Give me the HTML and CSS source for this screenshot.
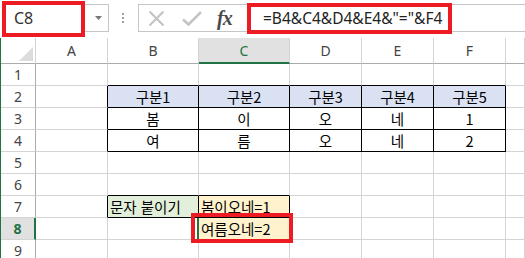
FILE: index.html
```html
<!DOCTYPE html>
<html lang="ko">
<head>
    <meta charset="UTF-8">
    <meta name="viewport" content="width=device-width, initial-scale=1.0">
    <title>문자 붙이기</title>
    <link rel="stylesheet" href="styles.css">
</head>
<body>

<!-- Formula bar -->
<div class="toolbar">
    <div class="name-box">C8</div>
    <div class="name-drop">
        <svg width="7" height="4" viewBox="0 0 7 4"><path d="M0 0h7L3.5 4z" fill="#777"/></svg>
    </div>
    <div class="grip"><i></i><i></i><i></i></div>
    <div class="fx-box">
        <svg class="fx-cancel" width="17" height="17" viewBox="0 0 17 17">
            <path d="M1.5 1.5l14 14M15.5 1.5l-14 14" stroke="#c4c4c4" stroke-width="2.2" fill="none"/>
        </svg>
        <svg class="fx-enter" width="20" height="15" viewBox="0 0 20 15">
            <path d="M1 8.5l5.5 5L19 1" stroke="#c4c4c4" stroke-width="2.6" fill="none"/>
        </svg>
        <span class="fx-label">fx</span>
    </div>
    <div class="formula">
        <span class="formula-text">=B4&amp;C4&amp;D4&amp;E4&amp;"="&amp;F4</span>
    </div>
</div>

<!-- Sheet -->
<div class="sheet">
    <div class="corner">
        <svg width="14" height="14" viewBox="0 0 14 14"><path d="M14 0v14H0z" fill="#dcdcdc"/></svg>
    </div>
    <div class="ch">A</div>
    <div class="ch">B</div>
    <div class="ch active">C</div>
    <div class="ch">D</div>
    <div class="ch">E</div>
    <div class="ch">F</div>
    <div class="ch"></div>

    <div class="rh">1</div>
    <div class="c"></div>
    <div class="c bb"></div>
    <div class="c bb"></div>
    <div class="c bb"></div>
    <div class="c bb"></div>
    <div class="c bb"></div>
    <div class="c"></div>

    <div class="rh">2</div>
    <div class="c br"></div>
    <div class="c bx hd">구분1</div>
    <div class="c bx hd">구분2</div>
    <div class="c bx hd">구분3</div>
    <div class="c bx hd">구분4</div>
    <div class="c bx hd">구분5</div>
    <div class="c"></div>

    <div class="rh">3</div>
    <div class="c br"></div>
    <div class="c bx">봄</div>
    <div class="c bx">이</div>
    <div class="c bx">오</div>
    <div class="c bx">네</div>
    <div class="c bx">1</div>
    <div class="c"></div>

    <div class="rh">4</div>
    <div class="c br"></div>
    <div class="c bx">여</div>
    <div class="c bx">름</div>
    <div class="c bx">오</div>
    <div class="c bx">네</div>
    <div class="c bx">2</div>
    <div class="c"></div>

    <div class="rh">5</div>
    <div class="c"></div>
    <div class="c"></div>
    <div class="c"></div>
    <div class="c"></div>
    <div class="c"></div>
    <div class="c"></div>
    <div class="c"></div>

    <div class="rh">6</div>
    <div class="c"></div>
    <div class="c bb"></div>
    <div class="c bb"></div>
    <div class="c"></div>
    <div class="c"></div>
    <div class="c"></div>
    <div class="c"></div>

    <div class="rh">7</div>
    <div class="c br"></div>
    <div class="c bx label">문자 붙이기</div>
    <div class="c bx result">봄이오네=1</div>
    <div class="c"></div>
    <div class="c"></div>
    <div class="c"></div>
    <div class="c"></div>

    <div class="rh active">8</div>
    <div class="c"></div>
    <div class="c"></div>
    <div class="c result selected">여름오네=2</div>
    <div class="c"></div>
    <div class="c"></div>
    <div class="c"></div>
    <div class="c"></div>

    <div class="rh">9</div>
    <div class="c"></div>
    <div class="c"></div>
    <div class="c"></div>
    <div class="c"></div>
    <div class="c"></div>
    <div class="c"></div>
    <div class="c"></div>

    <!-- red annotation around C8 -->
    <div class="mark"></div>
</div>

</body>
</html>
```

FILE: styles.css
```css
body {
    margin: 0;
    background-color: #fff;
    color: #000;
    font-family: "Noto Sans CJK KR", "Noto Sans", sans-serif;
    overflow: hidden;
}

/* formula bar */
.toolbar {
    display: flex;
    align-items: flex-start;
    height: 38px;
}
.name-box {
    box-sizing: border-box;
    width: 83px;
    height: 36px;
    margin: 1px 0 0 2px;
    padding-left: 8px;
    border: 4px solid #ed1c24;
    font: 16px/27px "Noto Sans", sans-serif;
    color: #333;
}
.name-drop {
    box-sizing: border-box;
    width: 24px;
    height: 28px;
    margin-top: 4px;
    padding-left: 3px;
    border: 1px solid #c6c6c6;
    border-left: none;
    display: flex;
    align-items: center;
    justify-content: center;
}
.grip {
    display: flex;
    flex-direction: column;
    gap: 2px;
    margin: 13px 0 0 13px;
}
.grip i {
    width: 2px;
    height: 2px;
    background-color: #a0a0a0;
}
.fx-box {
    box-sizing: border-box;
    width: 110px;
    height: 28px;
    margin: 4px 0 0 14px;
    border: 1px solid #c6c6c6;
    display: flex;
    align-items: center;
}
.fx-cancel {
    margin-left: 9px;
}
.fx-enter {
    margin-left: 17px;
}
.fx-label {
    margin-left: 15px;
    font: italic bold 20px/1 "Liberation Serif", serif;
    color: #4a4a4a;
    letter-spacing: -1px;
}
.formula {
    flex: 1;
    box-sizing: border-box;
    height: 28px;
    margin-top: 4px;
    border-top: 1px solid #c6c6c6;
    border-bottom: 1px solid #c6c6c6;
}
.formula-text {
    display: inline-block;
    box-sizing: border-box;
    width: 205px;
    height: 31px;
    margin: -5px 0 0 -1px;
    padding-left: 12px;
    border: 4px solid #ed1c24;
    background-color: #fff;
    font: 15.5px/22px "Noto Sans", sans-serif;
    color: #222;
    white-space: nowrap;
}

/* sheet grid */
.sheet {
    position: relative;
    border-left: 1px solid #217346;
    display: grid;
    grid-template-columns: 35px 72px 91px 91px 72px 72px 72px 1fr;
    grid-template-rows: 26px repeat(9, 22px);
}
.corner {
    box-sizing: border-box;
    border-right: 1px solid #d4d4d4;
    border-bottom: 1px solid #ababab;
    display: flex;
    align-items: flex-end;
    justify-content: flex-end;
    padding: 0 2px 2px 0;
}
.ch {
    box-sizing: border-box;
    border-right: 1px solid #d4d4d4;
    border-bottom: 1px solid #ababab;
    display: flex;
    align-items: center;
    justify-content: center;
    font: 14px "Noto Sans", sans-serif;
    color: #444;
}
.ch.active {
    background-color: #e1e1e1;
    color: #217346;
    border-bottom: 2px solid #217346;
}
.rh {
    box-sizing: border-box;
    border-right: 1px solid #ababab;
    border-bottom: 1px solid #d4d4d4;
    display: flex;
    align-items: center;
    justify-content: center;
    font: 14px "Noto Sans", sans-serif;
    color: #444;
}
.rh.active {
    background-color: #e1e1e1;
    color: #217346;
    font-weight: bold;
    border-right: 2px solid #217346;
}
.c {
    box-sizing: border-box;
    border-right: 1px solid #d4d4d4;
    border-bottom: 1px solid #d4d4d4;
    display: flex;
    align-items: center;
    justify-content: center;
    font-size: 14.5px;
    white-space: nowrap;
}
.c.bb {
    border-bottom-color: #000;
}
.c.br {
    border-right-color: #000;
}
.c.bx {
    border-right-color: #000;
    border-bottom-color: #000;
}
.c.hd {
    background-color: #d9e1f2;
}
.c.label {
    background-color: #e2efda;
    justify-content: flex-start;
    padding-left: 2px;
}
.c.result {
    background-color: #fff2cc;
    justify-content: flex-start;
    padding-left: 2px;
}
.c.selected {
    box-shadow: -2px 0 0 #217346;
}
.mark {
    position: absolute;
    left: 190px;
    top: 175px;
    width: 102px;
    height: 30px;
    box-sizing: border-box;
    border: 4px solid #ed1c24;
}
```
